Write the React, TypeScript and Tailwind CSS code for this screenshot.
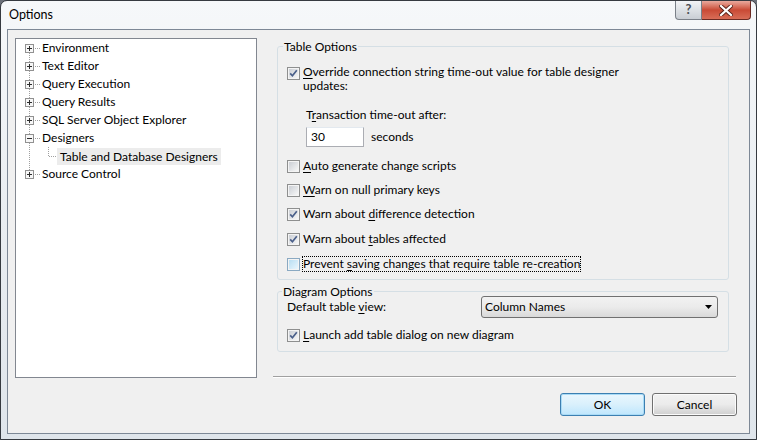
import React from "react";

const font = { fontFamily: '"Lato", "Noto Sans", sans-serif' };

function CheckBox({ checked, hot }: { checked?: boolean; hot?: boolean }) {
  return (
    <svg width="13" height="13" viewBox="0 0 13 13" className="shrink-0">
      <defs>
        <linearGradient id="cbInner" x1="0" y1="0" x2="1" y2="1">
          <stop offset="0" stopColor="#cbcfd5" />
          <stop offset="1" stopColor="#f7f7f7" />
        </linearGradient>
        <linearGradient id="cbHot" x1="0" y1="0" x2="1" y2="1">
          <stop offset="0" stopColor="#b9def2" />
          <stop offset="1" stopColor="#e9f6fd" />
        </linearGradient>
      </defs>
      <rect x="0.5" y="0.5" width="12" height="12" fill="#f4f4f4" stroke={hot ? "#8aa9c2" : "#8e8f8f"} />
      <rect x="2" y="2" width="9" height="9" fill={hot ? "url(#cbHot)" : "url(#cbInner)"} />
      {checked && (
        <path d="M3.2 6.4 L5.4 8.8 L9.8 3.2" fill="none" stroke="#4a5f8a" strokeWidth="1.7" />
      )}
    </svg>
  );
}

function CheckRow({
  checked,
  hot,
  focus,
  className,
  children,
}: {
  checked?: boolean;
  hot?: boolean;
  focus?: boolean;
  className?: string;
  children: React.ReactNode;
}) {
  return (
    <div className={`flex items-center h-[16px] ${className ?? ""}`}>
      <CheckBox checked={checked} hot={hot} />
      {focus ? (
        <span className="ml-[2px] border border-dotted border-black px-[0px] leading-[14px]">{children}</span>
      ) : (
        <span className="ml-[3px] leading-[16px]">{children}</span>
      )}
    </div>
  );
}

// tree line prefix drawn per row
function TreeLines({ kind }: { kind: "first" | "mid" | "open" | "child" | "last" }) {
  const dot = "#a0a0a0";
  if (kind === "child") {
    return (
      <svg width="41" height="18" className="shrink-0" shapeRendering="crispEdges">
        <line x1="13.5" y1="0" x2="13.5" y2="18" stroke={dot} strokeDasharray="1 1" />
        <line x1="32.5" y1="0" x2="32.5" y2="9" stroke={dot} strokeDasharray="1 1" />
        <line x1="33" y1="9.5" x2="41" y2="9.5" stroke={dot} strokeDasharray="1 1" />
      </svg>
    );
  }
  return (
    <svg width="26" height="18" className="shrink-0" shapeRendering="crispEdges">
      {kind !== "first" && <line x1="13.5" y1="0" x2="13.5" y2="5" stroke={dot} strokeDasharray="1 1" />}
      {kind !== "last" && <line x1="13.5" y1="14" x2="13.5" y2="18" stroke={dot} strokeDasharray="1 1" />}
      <line x1="19" y1="9.5" x2="25" y2="9.5" stroke={dot} strokeDasharray="1 1" />
      <rect x="9.5" y="5.5" width="8" height="8" fill="#f7f7f7" stroke="#919191" />
      <line x1="11" y1="9.5" x2="16" y2="9.5" stroke="#2c2c2c" />
      {kind !== "open" && <line x1="13.5" y1="7" x2="13.5" y2="12" stroke="#2c2c2c" />}
    </svg>
  );
}

function TreeRow({ kind, label }: { kind: "first" | "mid" | "open" | "child" | "last"; label: string }) {
  return (
    <div className="flex items-center h-[18px]">
      <TreeLines kind={kind} />
      {kind === "child" ? (
        <span className="bg-[#ececec] px-[3px] h-[17px] leading-[17px]">{label}</span>
      ) : (
        <span className="leading-[18px]">{label}</span>
      )}
    </div>
  );
}

function u(s: string) {
  return <span className="underline underline-offset-[2px]">{s}</span>;
}

export default function App() {
  return (
    <div className="w-[757px] h-[440px] bg-[#6b7079] text-[12px] text-black" style={font}>
      <div className="w-full h-full flex flex-col border border-[#363a40] rounded-t-[7px] bg-gradient-to-b from-[#f6f8fa] via-[#e9edf1] to-[#dfe5eb] overflow-hidden">
        {/* title bar */}
        <div className="h-[28px] flex items-start shrink-0">
          <span className="pl-[8px] pt-[6px] text-[12.5px] leading-[16px]">Options</span>
          <div className="ml-auto mr-[5px] flex">
            <div className="w-[27px] h-[19px] rounded-bl-[4px] border border-t-0 border-[#7a8088] bg-gradient-to-b from-[#f3f4f6] via-[#dde1e5] to-[#c9ced4] flex items-center justify-center text-[13px] text-[#4b4f55] font-bold">
              ?
            </div>
            <div className="w-[49px] h-[19px] rounded-br-[4px] border border-t-0 border-l-0 border-[#6b2a22] bg-gradient-to-b from-[#e9a99d] via-[#c94a35] to-[#d86d57] flex items-center justify-center">
              <svg width="14" height="11" viewBox="0 0 14 11">
                <path d="M2 1 L12 10 M12 1 L2 10" stroke="#5a2219" strokeWidth="4" strokeLinecap="square" />
                <path d="M2 1 L12 10 M12 1 L2 10" stroke="#ffffff" strokeWidth="2.2" strokeLinecap="square" />
              </svg>
            </div>
          </div>
        </div>

        {/* frame body */}
        <div className="flex-1 flex flex-col px-[6px] pb-[5px]">
          <div className="flex-1 flex flex-col border border-[#7d8896] bg-[#f0f0f0]">
            <div className="flex pt-[8px] pl-[7px]">
              {/* tree */}
              <div className="w-[242px] h-[340px] border border-[#828790] bg-white">
                <TreeRow kind="first" label="Environment" />
                <TreeRow kind="mid" label="Text Editor" />
                <TreeRow kind="mid" label="Query Execution" />
                <TreeRow kind="mid" label="Query Results" />
                <TreeRow kind="mid" label="SQL Server Object Explorer" />
                <TreeRow kind="open" label="Designers" />
                <TreeRow kind="child" label="Table and Database Designers" />
                <TreeRow kind="last" label="Source Control" />
              </div>

              {/* right side */}
              <div className="ml-[16px] w-[463px] h-[340px] flex flex-col">
                <fieldset className="mt-[1px] ml-[4px] w-[452px] border border-[#d5dfe5] rounded-[3px] pl-[9px] pb-[7px] flex flex-col">
                  <legend className="ml-[-4px] px-[1px] leading-[15px]">Table Options</legend>
                  <div className="flex items-start mt-[11px]">
                    <div className="mt-[2px]">
                      <CheckBox checked />
                    </div>
                    <span className="ml-[3px] leading-[14px]">
                      {u("O")}verride connection string time-out value for table designer
                      <br />
                      updates:
                    </span>
                  </div>
                  <div className="ml-[19px] mt-[14px] leading-[15px]">T{u("r")}ansaction time-out after:</div>
                  <div className="ml-[19px] mt-[5px] flex items-center">
                    <div className="w-[58px] h-[20px] border border-[#abadb3] border-t-[#e3e9ef] bg-white pl-[4px] leading-[18px]">30</div>
                    <span className="ml-[7px]">seconds</span>
                  </div>
                  <CheckRow className="mt-[11px]">{u("A")}uto generate change scripts</CheckRow>
                  <CheckRow className="mt-[8px]">{u("W")}arn on null primary keys</CheckRow>
                  <CheckRow className="mt-[8px]" checked>
                    Warn about {u("d")}ifference detection
                  </CheckRow>
                  <CheckRow className="mt-[9px]" checked>
                    Warn about {u("t")}ables affected
                  </CheckRow>
                  <CheckRow className="mt-[9px]" hot focus>
                    Prevent {u("s")}aving changes that require table re-creation
                  </CheckRow>
                </fieldset>

                <fieldset className="mt-[4px] ml-[4px] w-[452px] border border-[#d5dfe5] rounded-[3px] pl-[9px] pr-[10px] pb-[8px] flex flex-col">
                  <legend className="ml-[-5px] px-[1px] leading-[15px]">Diagram Options</legend>
                  <div className="flex items-center mt-[-3px] h-[22px]">
                    <span>Default table {u("v")}iew:</span>
                    <div className="ml-auto w-[237px] h-[22px] rounded-[3px] border border-[#707070] bg-gradient-to-b from-[#f2f2f2] via-[#ebebeb] to-[#d9d9d9] flex items-center pl-[3px] pr-[5px]">
                      <span>Column Names</span>
                      <svg width="7" height="4" viewBox="0 0 7 4" className="ml-auto">
                        <path d="M0 0 H7 L3.5 4 Z" fill="#000" />
                      </svg>
                    </div>
                  </div>
                  <CheckRow className="mt-[9px]" checked>
                    {u("L")}aunch add table dialog on new diagram
                  </CheckRow>
                </fieldset>

                <div className="mt-auto h-[2px] border-t border-[#a0a0a0] border-b border-b-white" />
              </div>
            </div>

            {/* buttons */}
            <div className="mt-[15px] flex justify-end gap-[7px] pr-[12px]">
              <div className="w-[85px] h-[23px] rounded-[3px] border border-[#3c7fb1] bg-gradient-to-b from-[#eaf6fd] via-[#d9f0fc] to-[#bee6fd] shadow-[inset_0_0_0_1px_#a9dbf6] flex items-center justify-center">
                OK
              </div>
              <div className="w-[85px] h-[23px] rounded-[3px] border border-[#707070] bg-gradient-to-b from-[#f2f2f2] via-[#ebebeb] to-[#cfcfcf] shadow-[inset_0_0_0_1px_#fbfbfb] flex items-center justify-center">
                Cancel
              </div>
            </div>
          </div>
        </div>
      </div>
    </div>
  );
}
